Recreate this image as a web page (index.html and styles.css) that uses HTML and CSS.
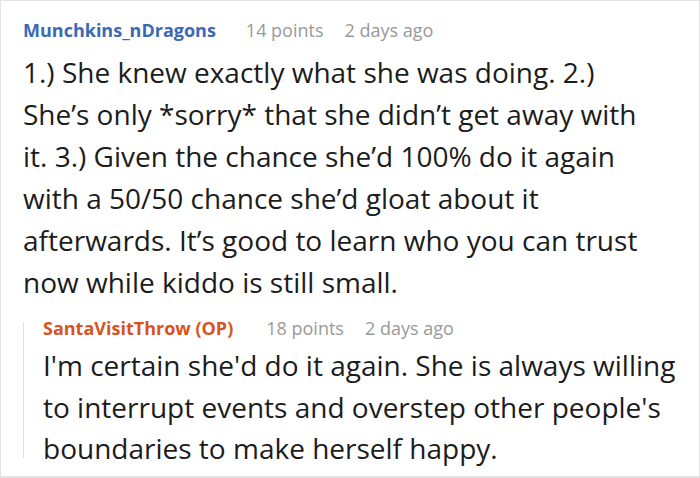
FILE: index.html
```html
<!DOCTYPE html>
<html>
<head>
<meta charset="utf-8">
<link rel="stylesheet" href="styles.css">
</head>
<body>
<div class="frame">
  <div class="comment">
    <div class="meta">
      <span class="author">Munchkins_nDragons</span>
      <span class="info">14 points</span>
      <span class="info">2 days ago</span>
    </div>
    <p class="text main-text">1.) She knew exactly what she was doing. 2.) She’s only *sorry* that she didn’t get away with it. 3.) Given the chance she’d 100% do it again with a 50/50 chance she’d gloat about it afterwards. It’s good to learn who you can trust now while kiddo is still small.</p>
    <div class="reply">
      <div class="meta">
        <span class="author op">SantaVisitThrow (OP)</span>
        <span class="info">18 points</span>
        <span class="info">2 days ago</span>
      </div>
      <p class="text reply-text">I'm certain she'd do it again. She is always willing to interrupt events and overstep other people's boundaries to make herself happy.</p>
    </div>
  </div>
</div>
</body>
</html>
```

FILE: styles.css
```css
html, body {
  margin: 0;
  padding: 0;
  background: #fff;
}
.frame {
  width: 700px;
  height: 478px;
  box-sizing: border-box;
  border: 1px solid #e3e3e3;
  border-bottom-width: 2px;
  overflow: hidden;
  font-family: "Open Sans", "Noto Sans", sans-serif;
  color: #1c1c1c;
}
.comment {
  padding: 17px 0 0 22px;
}
.meta {
  display: flex;
  gap: 21px;
  font-size: 18px;
  line-height: 24px;
  height: 24px;
  align-items: baseline;
}
.author {
  font-weight: 700;
  color: #3b69b4;
  margin-right: 9px;
}
.author.op {
  color: #d7531f;
  margin-right: 12px;
}
.info {
  color: #999;
}
.text {
  margin: 9px 0 0 0;
  font-size: 28px;
  line-height: 42px;
}
.main-text {
  width: 644px;
}
.reply {
  position: relative;
  margin-top: 13px;
  padding-left: 20px;
}
.reply::before {
  content: "";
  position: absolute;
  left: 0;
  top: 6px;
  bottom: 12px;
  border-left: 1px solid #e0e0e0;
}
.reply-text {
  margin-top: 5px;
  line-height: 41.5px;
  width: 660px;
}
```
